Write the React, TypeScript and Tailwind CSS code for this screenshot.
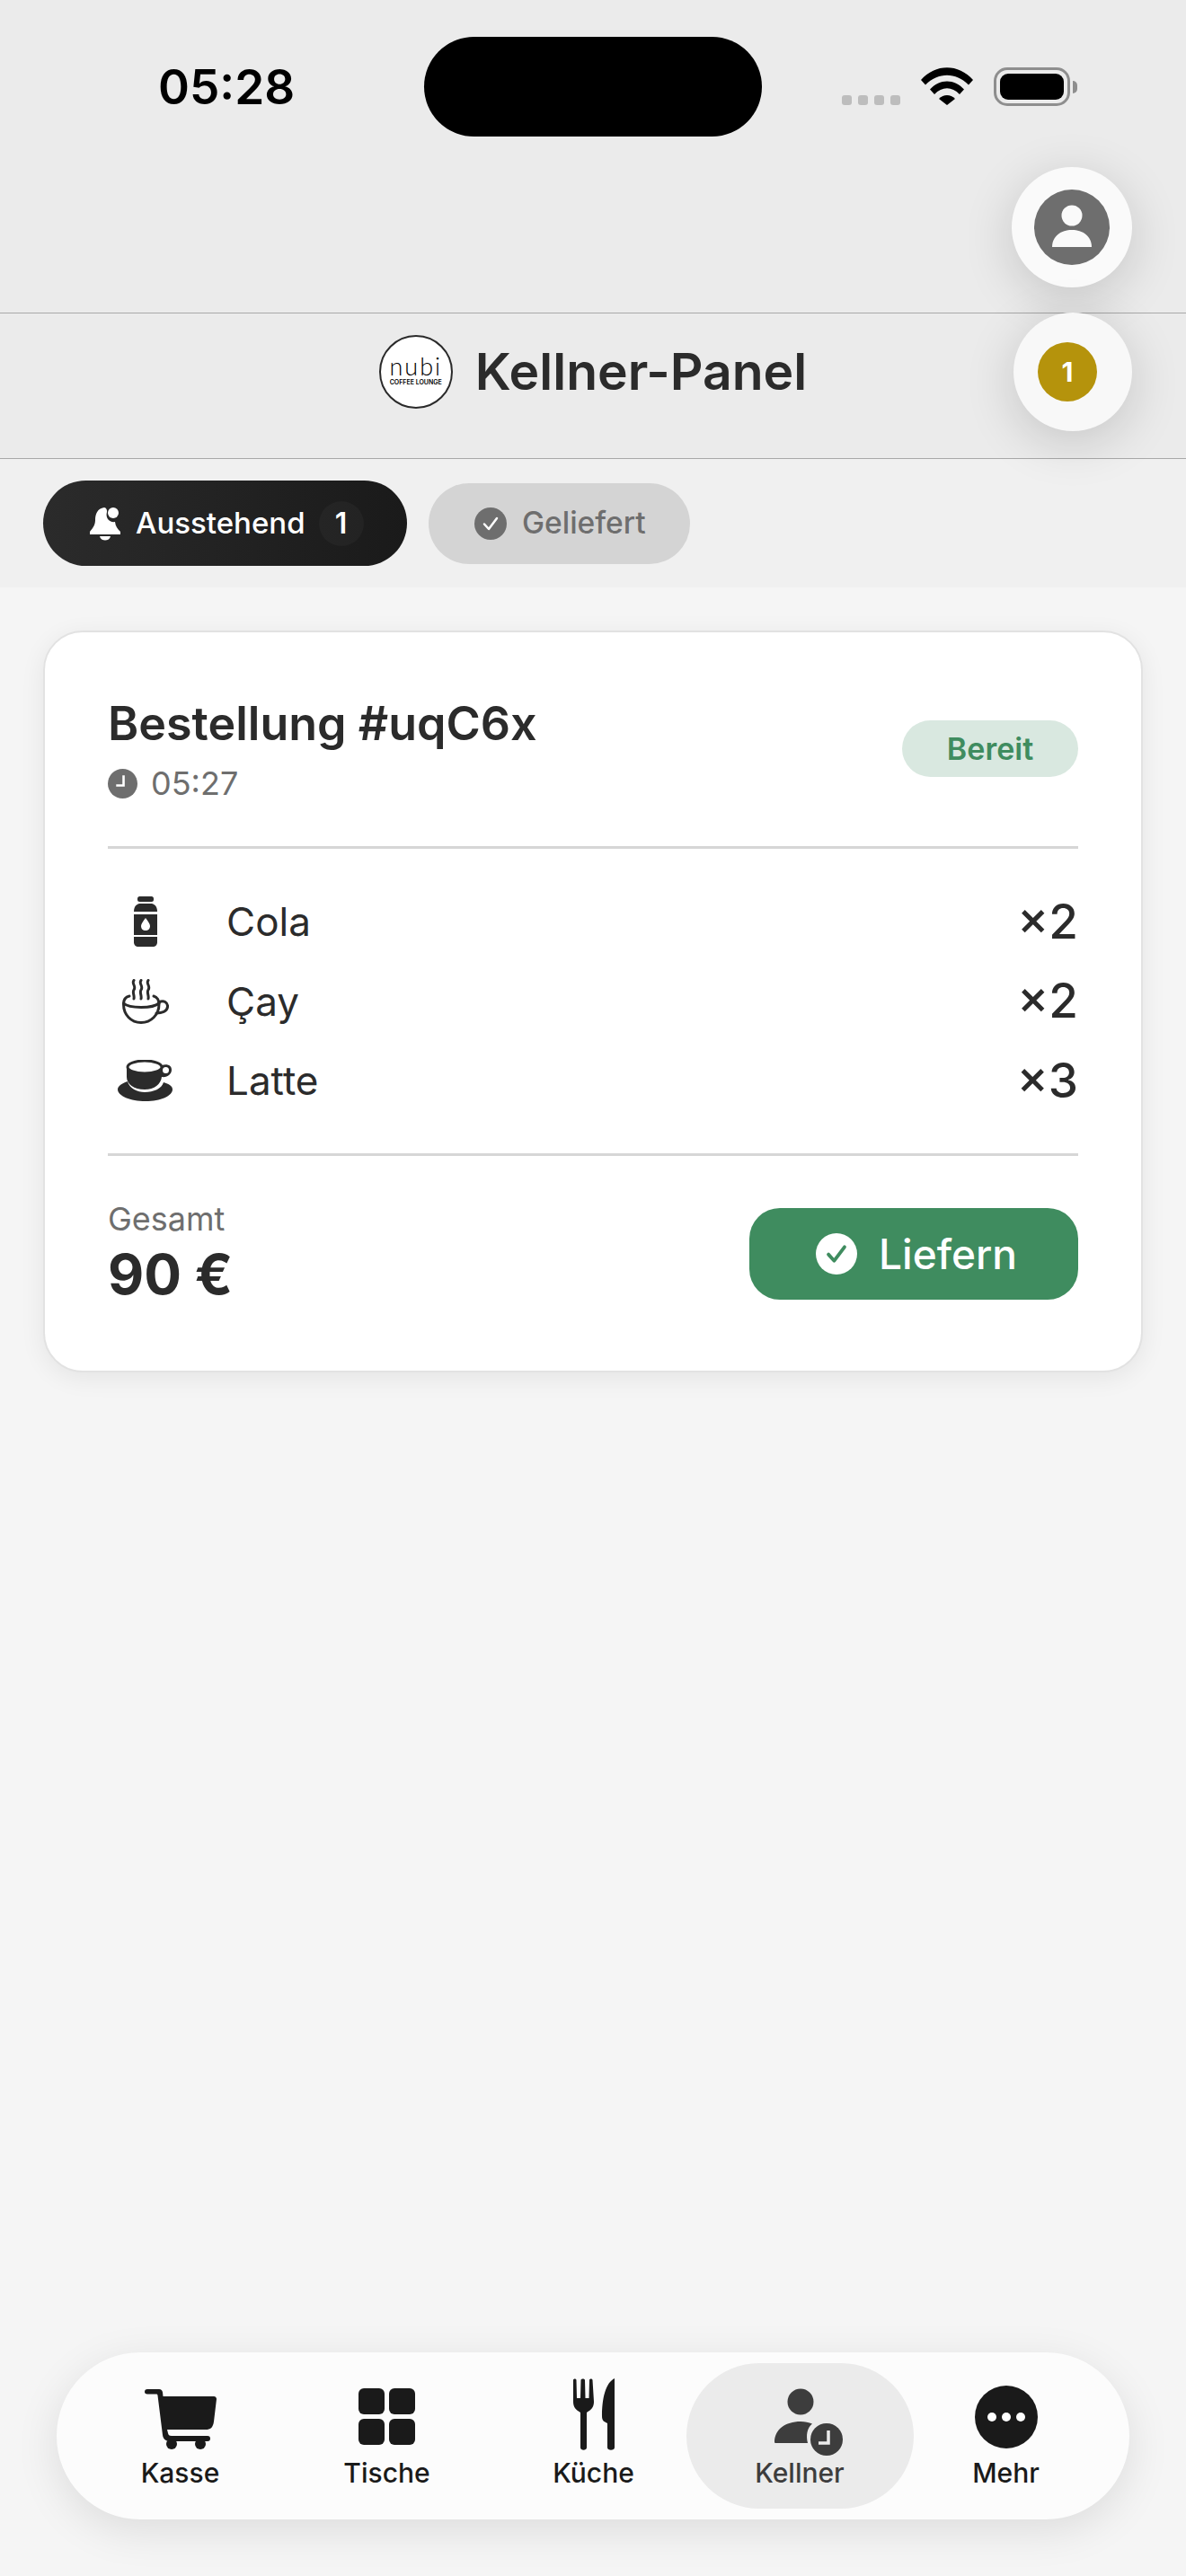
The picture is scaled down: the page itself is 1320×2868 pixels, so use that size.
const font = { fontFamily: "Inter, 'Noto Sans', sans-serif" }

function Wifi() {
  return (
    <svg width="58" height="42" viewBox="0 0 58 42" fill="black">
      <path d="M0 14 C16 -4.5 42 -4.5 58 14 L53 19.5 C39 5 19 5 5 19.5 Z" />
      <path d="M10 24.5 C21 12.5 37 12.5 48 24.5 L43 30 C34.5 21 23.5 21 15 30 Z" />
      <path d="M20 35 C25 29.5 33 29.5 38 35 L29 42 Z" />
    </svg>
  )
}

function Battery() {
  return (
    <div className="flex items-center gap-[3px]">
      <div className="flex h-[43px] w-[85px] rounded-[15px] border-[3px] border-[#8e8e8e] p-[4px]">
        <div className="flex-1 rounded-[9px] bg-black" />
      </div>
      <div className="h-[14px] w-[5px] rounded-r-full bg-[#8e8e8e]" />
    </div>
  )
}

function StatusBar() {
  return (
    <div className="flex items-start pt-[41px]">
      <div className="w-[472px] pt-[29px] pl-[176px] text-[53px] leading-[54px] font-semibold text-black">05:28</div>
      <div className="h-[111px] w-[376px] rounded-full bg-black" />
      <div className="ml-[89px] flex gap-[4px] pt-[34px]">
        <div className="mt-[31px] mr-[19px] flex gap-[7px]">
          <div className="size-[11px] rounded-[3px] bg-[#bdbdbd]" />
          <div className="size-[11px] rounded-[3px] bg-[#bdbdbd]" />
          <div className="size-[11px] rounded-[3px] bg-[#bdbdbd]" />
          <div className="size-[11px] rounded-[3px] bg-[#bdbdbd]" />
        </div>
        <Wifi />
        <div className="ml-[19px]">
          <Battery />
        </div>
      </div>
    </div>
  )
}

function Logo() {
  return (
    <div className="flex size-[82px] flex-col items-center justify-center gap-[3px] rounded-full border-2 border-[#2a2a2a] bg-white text-black">
      <div className="mt-[-1px] text-[27px] leading-[22px] font-light tracking-[2px]" style={{ fontFamily: "Lato, sans-serif" }}>nubi</div>
      <div className="text-[7px] leading-[8px] font-semibold whitespace-nowrap">COFFEE LOUNGE</div>
    </div>
  )
}

function BellIcon() {
  return (
    <svg width="34" height="38" viewBox="0 0 34 38" fill="white">
      <path d="M16 1 C8 2 6 9 6 15 C6 21 3 24 0 28 V31 H34 V28 C31 25 28.500 22 28 17 C22 18 17 13 19 6 C19.500 4 18 1 16 1 Z" />
      <circle cx="26" cy="7" r="6" />
      <path d="M11 33 H23 C22 39 12 39 11 33 Z" />
    </svg>
  )
}

function CheckCircle({ size, bg, fg, stroke }: { size: number; bg: string; fg: string; stroke: number }) {
  return (
    <svg width={size} height={size} viewBox="0 0 36 36">
      <circle cx="18" cy="18" r="18" fill={bg} />
      <path d="M11 18.500 L16 24 L25 12" fill="none" stroke={fg} strokeWidth={stroke} strokeLinecap="round" strokeLinejoin="round" />
    </svg>
  )
}

function ClockSmall() {
  return (
    <svg width="33" height="33" viewBox="0 0 32 32">
      <circle cx="16" cy="16" r="16" fill="#6e6e6e" />
      <path d="M17 7 V18 H9" fill="none" stroke="white" strokeWidth="2.500" />
    </svg>
  )
}

function BottleIcon() {
  return (
    <svg width="26" height="56" viewBox="0 0 26 56" fill="#2b2b2b">
      <rect x="4" y="0" width="18" height="6" rx="2.500" />
      <path d="M6 8 H20 C24 9 26 12 26 17 H0 C0 12 2 9 6 8 Z" />
      <path fillRule="evenodd" d="M0 20 H26 V43 H0 Z M13 24 C10 28 8 31 8 33 C8 36 10 38 13 38 C16 38 18 36 18 33 C18 31 16 28 13 24 Z" />
      <path d="M0 45 H26 V51 C26 54 24 56 21 56 H5 C2 56 0 54 0 51 Z" />
    </svg>
  )
}

function SteamCupIcon() {
  return (
    <svg width="52" height="50" viewBox="0 0 52 50" fill="none" stroke="#2b2b2b" strokeWidth="3" strokeLinecap="round">
      <path d="M13 1.500 C10 5 16 8 13 12 C11 15 14 18 13 22" />
      <path d="M21 1.500 C18 5 24 8 21 12 C19 15 22 18 21 22" />
      <path d="M29 1.500 C26 5 32 8 29 12 C27 15 30 18 29 22" />
      <path d="M8 19 C3 20 1.500 24 1.500 28 C1.500 40 10 48.500 21 48.500 C32 48.500 41 40 41 28 C41 24 39 20 35 19" />
      <path d="M1.500 27 C8 33 34 33 41 27" />
      <path d="M41 26 C46 23 51 26 50.500 31 C50 36 44 38 38 38" />
    </svg>
  )
}

function LatteIcon() {
  return (
    <svg width="62" height="46" viewBox="0 0 62 46">
      <path d="M11 24 C13 32 22 36 30 36 C40 36 49 32 51 25 C57 27 61 29 61 33 C61 40 48 46 31 46 C14 46 0 40 0 33 C0 29 5 26 11 24 Z" fill="#2b2b2b" />
      <path d="M10 9 V19 C10 27 18 33 30 33 C41 33 48 27 49 19 C55 20 60 16 60 11 C60 6 55 4 49 6 V9 C46 15 14 15 10 9 Z" fill="#2b2b2b" />
      <ellipse cx="30" cy="8" rx="19" ry="7" fill="white" stroke="#2b2b2b" strokeWidth="3" />
      <circle cx="53.500" cy="11.500" r="3.500" fill="white" />
    </svg>
  )
}

function CartIcon() {
  return (
    <svg width="80" height="68" viewBox="0 0 80 68" fill="#1a1a1a">
      <path d="M3 1 H16 C18.500 1 19.500 2.500 20 4.500 L20.500 9 H77 C79 9 80 10.500 80 12 L77 37 C76 44 73 46 68 46 H25 L26 50 C26.500 52 27 53 30 53 H70 C72 53 73 54 73 56 C73 58 72 59 70 59 H28 C23 59 20.500 56 20 52 L14.500 8 C14.300 7 14 6.500 13 6.500 H3 C1 6.500 0 5.500 0 4 C0 2 1 1 3 1 Z" />
      <circle cx="30" cy="62" r="6" />
      <circle cx="62" cy="62" r="6" />
    </svg>
  )
}

function GridIcon() {
  return (
    <div className="mb-[5px] grid size-[63px] grid-cols-2 gap-[5px]">
      <div className="rounded-[6px] bg-[#1a1a1a]" />
      <div className="rounded-[6px] bg-[#1a1a1a]" />
      <div className="rounded-[6px] bg-[#1a1a1a]" />
      <div className="rounded-[6px] bg-[#1a1a1a]" />
    </div>
  )
}

function CutleryIcon() {
  return (
    <svg className="mb-[-1px]" width="46" height="80" viewBox="0 0 46 80" fill="#1a1a1a">
      <path d="M0 2 C0 0 3.500 0 3.500 2 L4 22 H8 L8.500 2 C8.500 0 13 0 13 2 L13.500 22 H17.500 L18 2 C18 0 21.500 0 21.500 2 L23 26 C23 32 20 35 15 38 L15 77 C15 80.500 8 80.500 8 77 L8 38 C3 35 0 32 0 26 Z" />
      <path d="M46 0 V77 C46 80.500 38 80.500 38 77 V50 C34 48 32 47 32 42 C32 22 36 5 46 0 Z" />
    </svg>
  )
}

function WaiterIcon() {
  return (
    <svg className="mb-[-7px] ml-[20px]" width="76" height="75" viewBox="0 0 76 75" fill="#3d3d3d">
      <circle cx="29" cy="15" r="14.500" />
      <path d="M0 60 C0 46 12 37 29 37 C34 37 38 38 42 39.500 C36 44 35 53 37 61 H3 C1 61 0 61 0 60 Z" />
      <circle cx="58" cy="57" r="18" />
      <path d="M60 47 V61 H49" fill="none" stroke="#ebebeb" strokeWidth="3.500" />
    </svg>
  )
}

function MoreIcon() {
  return (
    <svg className="mb-[1px]" width="70" height="70" viewBox="0 0 70 70">
      <circle cx="35" cy="35" r="35" fill="#1a1a1a" />
      <circle cx="19" cy="35" r="5" fill="white" />
      <circle cx="35" cy="35" r="5" fill="white" />
      <circle cx="51" cy="35" r="5" fill="white" />
    </svg>
  )
}

function OrderRow({ icon, name, qty }: { icon: React.ReactNode; name: string; qty: string }) {
  return (
    <div className="flex h-[88.500px] items-center">
      <div className="flex w-[84px] items-center justify-center">{icon}</div>
      <div className="ml-[48px] flex-1 text-[44px] leading-none text-[#2b2b2b]">{name}</div>
      <div className="text-[53px] leading-none font-medium text-[#2b2b2b]">{qty}</div>
    </div>
  )
}

function NavItem({ icon, label, active }: { icon: React.ReactNode; label: string; active?: boolean }) {
  return (
    <div className={active ? "mx-[-12px] flex h-[162px] w-[253px] flex-col items-center rounded-[81px] bg-[#ebebeb] text-[#3d3d3d]" : "flex h-[162px] w-[230px] flex-col items-center text-[#1a1a1a]"}>
      <div className="flex h-[96px] items-end justify-center">{icon}</div>
      <div className="mt-[8px] text-[30px] leading-[36px] font-medium">{label}</div>
    </div>
  )
}

export default function App() {
  return (
    <div className="relative flex h-[2868px] w-[1320px] flex-col overflow-hidden bg-[#f5f5f5]" style={font}>
      <div className="h-[349px] border-b border-[#a8a8a8] bg-[#ebebeb]">
        <StatusBar />
      </div>
      <div className="flex h-[162px] items-center justify-center gap-[25px] border-b border-[#a8a8a8] bg-[#ebebeb] pb-[32px]">
        <Logo />
        <div className="text-[57px] leading-none font-semibold text-[#2b2b2b]">Kellner-Panel</div>
      </div>

      <div className="flex h-[143px] items-center gap-[24px] bg-[#f0f0f0] pl-[48px]">
        <div className="flex h-[95px] w-[405px] items-center rounded-full bg-gradient-to-r from-[#2b2b2b] to-[#1a1a1a] pl-[52px] text-white">
          <BellIcon />
          <span className="ml-[17px] text-[33px] leading-none font-medium">Ausstehend</span>
          <div className="ml-[15px] flex size-[50px] items-center justify-center rounded-full bg-white/[0.03] text-[32px] font-semibold">1</div>
        </div>
        <div className="flex h-[90px] w-[291px] items-center rounded-full bg-[#d4d4d4] pl-[51px] text-[#6e6e6e]">
          <CheckCircle size={36} bg="#6e6e6e" fg="white" stroke={2.500} />
          <span className="ml-[17px] text-[33.500px] leading-none font-medium">Geliefert</span>
        </div>
      </div>

      <div className="flex-1 px-[48px] pt-[48px]">
        <div className="h-[826px] rounded-[44px] border-2 border-[#e2e2e2] bg-white px-[70px] pt-[72px] shadow-[0_6px_28px_rgba(0,0,0,0.07)]">
          <div className="flex h-[169px] items-start justify-between border-b-[3px] border-[#d6d6d6]">
            <div>
              <div className="text-[52px] leading-[60px] font-semibold text-[#2b2b2b]">Bestellung #uqC6x</div>
              <div className="mt-[14px] flex items-center gap-[15px]">
                <ClockSmall />
                <span className="text-[36px] leading-[44px] text-[#6e6e6e]">05:27</span>
              </div>
            </div>
            <div className="mt-[26px] flex h-[63px] w-[196px] items-center justify-center rounded-full bg-[#d9e8e0] text-[34px] font-semibold text-[#3f8c5f]">Bereit</div>
          </div>

          <div className="flex h-[342px] flex-col justify-center border-b-[3px] border-[#d6d6d6]">
            <OrderRow icon={<BottleIcon />} name="Cola" qty="×2" />
            <OrderRow icon={<SteamCupIcon />} name="Çay" qty="×2" />
            <OrderRow icon={<LatteIcon />} name="Latte" qty="×3" />
          </div>

          <div className="flex items-start justify-between pt-[58px]">
            <div className="mt-[-9px]">
              <div className="text-[36px] leading-[42px] text-[#6e6e6e]">Gesamt</div>
              <div className="mt-[7px] text-[62px] leading-[68px] font-bold text-[#2b2b2b]">90 €</div>
            </div>
            <div className="flex h-[102px] w-[366px] items-center justify-center gap-[24px] rounded-[34px] bg-[#3f8c5f] pl-[6px] text-white">
              <CheckCircle size={46} bg="white" fg="#3f8c5f" stroke={3} />
              <span className="text-[46px] leading-none font-medium">Liefern</span>
            </div>
          </div>
        </div>
      </div>

      <div className="mx-[63px] mb-[63px] flex h-[186px] items-center justify-center rounded-full bg-[#fcfcfc] shadow-[0_12px_48px_rgba(0,0,0,0.10)]">
        <NavItem icon={<CartIcon />} label="Kasse" />
        <NavItem icon={<GridIcon />} label="Tische" />
        <NavItem icon={<CutleryIcon />} label="Küche" />
        <NavItem icon={<WaiterIcon />} label="Kellner" active />
        <NavItem icon={<MoreIcon />} label="Mehr" />
      </div>

      {/* schwebende Knöpfe rechts oben */}
      <div className="absolute top-[186px] left-[1126px] flex size-[134px] items-center justify-center rounded-full bg-[#fafafa] shadow-[0_12px_56px_rgba(0,0,0,0.16)]">
        <svg width="84" height="84" viewBox="0 0 84 84">
          <circle cx="42" cy="42" r="42" fill="#6e6e6e" />
          <circle cx="42" cy="29" r="11.500" fill="#fafafa" />
          <path d="M20 64 C20 52 30 45 42 45 C54 45 64 52 64 64 Z" fill="#fafafa" />
        </svg>
      </div>
      <div className="absolute top-[348px] left-[1128px] flex size-[132px] items-center justify-center rounded-full bg-[#f8f8f8] pr-[12px] shadow-[0_12px_56px_rgba(0,0,0,0.16)]">
        <div className="flex size-[66px] items-center justify-center rounded-full bg-[#b5930c] text-[30px] font-bold text-white">1</div>
      </div>
    </div>
  )
}
